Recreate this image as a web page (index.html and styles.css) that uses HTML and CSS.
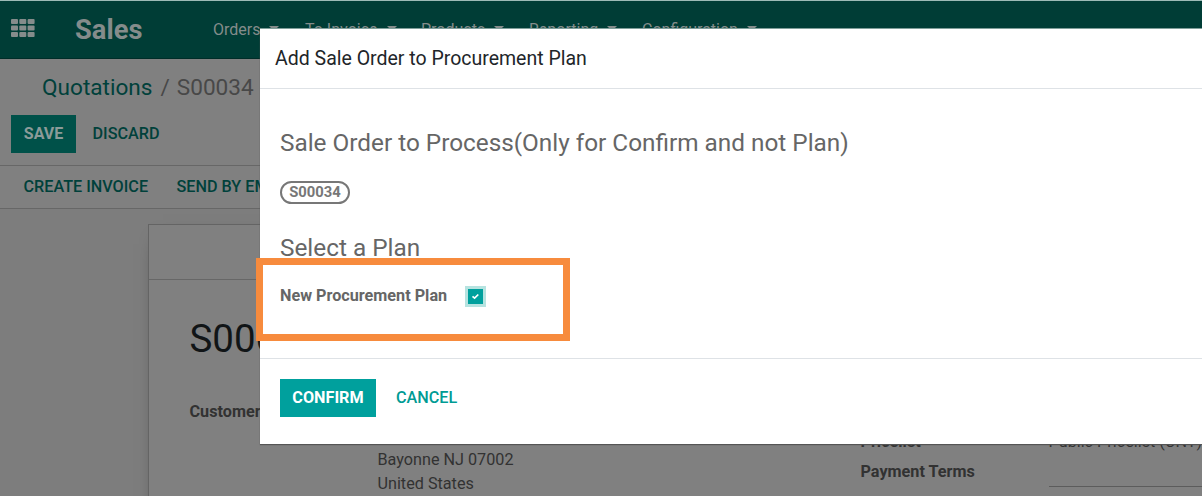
FILE: index.html
```html
<!DOCTYPE html>
<html lang="en">
<head>
<meta charset="utf-8">
<title>Sales - S00034</title>
<link rel="stylesheet" href="styles.css">
</head>
<body>
<div class="app">
  <header class="navbar">
    <svg class="apps" width="24" height="19" viewBox="0 0 24 19"><g fill="currentColor"><rect x="0" y="0" width="7" height="5" rx="1"/><rect x="8.3" y="0" width="7" height="5" rx="1"/><rect x="16.6" y="0" width="7" height="5" rx="1"/><rect x="0" y="6.5" width="7" height="5" rx="1"/><rect x="8.3" y="6.5" width="7" height="5" rx="1"/><rect x="16.6" y="6.5" width="7" height="5" rx="1"/><rect x="0" y="13" width="7" height="5" rx="1"/><rect x="8.3" y="13" width="7" height="5" rx="1"/><rect x="16.6" y="13" width="7" height="5" rx="1"/></g></svg>
    <span class="brand">Sales</span>
    <nav class="menu">
      <span class="menu-item orders">Orders</span>
      <span class="menu-item invoice">To Invoice</span>
      <span class="menu-item products">Products</span>
      <span class="menu-item reporting">Reporting</span>
      <span class="menu-item">Configuration</span>
    </nav>
  </header>
  <section class="control-panel">
    <div class="breadcrumb"><span class="crumb-link">Quotations</span><span class="slash">/</span><span class="crumb-current">S00034</span></div>
    <div class="actions"><span class="btn save">SAVE</span><span class="link discard">DISCARD</span></div>
  </section>
  <section class="statusbar"><span class="link create">CREATE INVOICE</span><span class="link send">SEND BY EMAIL</span></section>
  <main class="content">
    <article class="sheet">
      <div class="button-box"></div>
      <h1 class="order-name">S00034</h1>
      <div class="fields">
        <span class="label customer">Customer</span>
        <div class="address"><span class="city">Bayonne NJ 07002</span><span class="country">United States</span></div>
        <div class="terms-labels"><span class="label pricelist">Pricelist</span><span class="label payment">Payment Terms</span></div>
        <div class="terms-values"><span class="value">Public Pricelist (CNY)</span><span class="input-line"></span></div>
      </div>
    </article>
  </main>
</div>
<div class="modal">
  <header class="modal-header"><span class="modal-title">Add Sale Order to Procurement Plan</span></header>
  <div class="modal-body">
    <h2 class="section process">Sale Order to Process(Only for Confirm and not Plan)</h2>
    <span class="tag"><span class="tag-text">S00034</span></span>
    <h2 class="section select">Select a Plan</h2>
    <div class="plan-row"><span class="plan-label">New Procurement Plan</span>
      <span class="checkbox"><svg width="9" height="7" viewBox="0 0 9 7"><path d="M1.5 3.3 3.6 5.2 7.3 1.5" fill="none" stroke="#fff" stroke-width="1.7"/></svg></span></div>
  </div>
  <footer class="modal-footer"><span class="btn confirm">CONFIRM</span><span class="link cancel">CANCEL</span></footer>
</div>
<div class="highlight"></div>
</body>
</html>
```

FILE: styles.css
```css
* { box-sizing: border-box; }
body { margin: 0; width: 1202px; height: 496px; overflow: hidden; position: relative; font: 16.2px/24px Roboto, sans-serif; color: #323232; background: #7d7d7d; }
span { white-space: nowrap; }
h1, h2 { margin: 0; font-weight: 400; white-space: nowrap; }
.app { height: 496px; overflow: hidden; }
.navbar { height: 59px; border-top: 1px solid #9dbbb7; border-bottom: 1px solid #002d28; background: #003d36; display: flex; align-items: center; padding-left: 11px; color: #848c8b; }
.apps { margin-top: -3px; flex: none; }
.brand { width: 138px; margin-left: 40px; font-size: 27.3px; font-weight: 700; }
.menu { display: flex; font-size: 16px; }
.menu-item { display: flex; align-items: center; height: 24px; }
.menu-item::after { content: ""; margin: -3px 0 0 9px; border: 5px solid transparent; border-top-color: currentColor; border-bottom: 0; }
.orders { width: 92px; }
.invoice { width: 116px; }
.products { width: 108px; }
.reporting { width: 113px; }
.control-panel { height: 107px; background: #808080; border-bottom: 1px solid #676767; padding: 15px 0 0 11px; }
.breadcrumb { display: flex; font-size: 22.6px; height: 28px; line-height: 28px; padding-left: 31px; color: #484848; }
.crumb-link { color: #00413b; }
.slash { margin: 0 7px 0 8px; }
.actions { display: flex; margin-top: 13px; }
.btn { display: flex; align-items: center; justify-content: center; height: 38px; font-weight: 700; font-size: 16px; }
.link { font-weight: 500; color: #00413b; }
.save { width: 65px; background: #005149; color: #8b9b99; }
.discard { line-height: 38px; margin-left: 16.5px; }
.statusbar { height: 43px; background: #808080; border-bottom: 1px solid #676767; display: flex; padding-left: 23.5px; line-height: 42px; font-size: 16.2px; }
.send { margin-left: 28.5px; }
.content { padding: 15px 0 0 148px; }
.sheet { width: 1100px; height: 300px; background: #808080; border: 1px solid #646464; box-shadow: 0 5px 20px -15px #000; }
.button-box { height: 55px; border-bottom: 1px solid #676767; }
.order-name { padding: 34px 0 0 40.5px; font-size: 38.5px; line-height: 50px; color: #111517; }
.fields { display: flex; padding-left: 40.5px; margin-top: 36px; }
.label { font-weight: 700; color: #323232; }
.customer { width: 188px; }
.address { width: 483px; display: flex; flex-direction: column; padding-top: 48px; }
.terms-labels { width: 188px; display: flex; flex-direction: column; gap: 6px; padding-top: 30px; }
.terms-values { width: 190px; display: flex; flex-direction: column; padding-top: 30px; }
.input-line { height: 33px; border-bottom: 1px solid #5c5c5c; }
.modal { position: absolute; left: 260px; top: 28px; width: 950px; height: 416px; background: #fff; border-top: 1px solid #7f9e9a; box-shadow: 0 1px 1px #555; }
.modal-header { height: 60px; border-bottom: 1px solid #dee2e6; padding: 18px 15px; }
.modal-title { font-size: 19.5px; color: #212529; }
.modal-body { height: 270px; border-bottom: 1px solid #dee2e6; padding: 39px 20px 0; color: #666; }
.section { font-size: 24.33px; line-height: 30px; color: #666; }
.tag { display: flex; align-items: center; justify-content: center; width: 70px; height: 23px; margin-top: 23px; border: 2px solid #777; border-radius: 12px; font-size: 14.8px; line-height: 18px; font-weight: 700; color: #777; }
.tag-text { margin-top: -1px; }
.select { margin-top: 29px; }
.plan-row { display: flex; align-items: center; margin-top: 21px; height: 24px; }
.plan-label { width: 185px; font-weight: 700; color: #666; }
.checkbox { width: 21px; height: 21px; margin-top: 1px; border: 3px solid #b6e3e0; background: #00a09d; display: flex; align-items: center; justify-content: center; }
.modal-footer { display: flex; padding: 20px; }
.confirm { width: 96px; background: #00a09d; color: #fff; font-size: 16.2px; }
.cancel { margin-left: 20px; line-height: 38px; color: #009b94; }
.highlight { position: absolute; left: 256px; top: 258px; width: 314px; height: 83px; border: 7px solid #f78b3d; }
```
